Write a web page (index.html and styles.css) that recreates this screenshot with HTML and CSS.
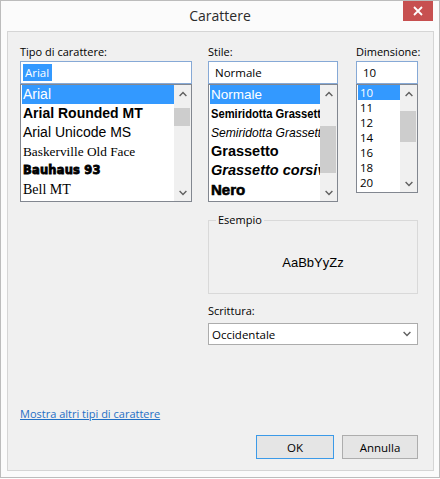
FILE: index.html
```html
<!DOCTYPE html>
<html lang="it">
<head>
<meta charset="utf-8">
<title>Carattere</title>
<link rel="stylesheet" href="styles.css">
</head>
<body>
<div class="window">
  <div class="titlebar">
    <span class="title">Carattere</span>
    <div class="close">
      <svg width="10" height="10" viewBox="0 0 10 10"><path d="M1 1 L9 9 M9 1 L1 9" stroke="#fff" stroke-width="1.8" fill="none"/></svg>
    </div>
  </div>
  <div class="client">
    <div class="columns">
      <div class="col col-font">
        <div class="label">Tipo di carattere:</div>
        <div class="edit"><span class="selection">Arial</span></div>
        <div class="list list-font">
          <div class="items">
            <div class="item selected f-arial">Arial</div>
            <div class="item f-rounded">Arial Rounded MT</div>
            <div class="item f-arial">Arial Unicode MS</div>
            <div class="item f-bask">Baskerville Old Face</div>
            <div class="item f-bauhaus">Bauhaus 93</div>
            <div class="item f-bell">Bell MT</div>
          </div>
          <div class="scroll">
            <div class="arrow"><svg width="8" height="6" viewBox="0 0 8 6"><polyline points="0.6,5 4,1.5 7.4,5" fill="none" stroke="#606060" stroke-width="1.4"/></svg></div>
            <div class="thumb thumb-font"></div>
            <div class="arrow arrow-down"><svg width="8" height="6" viewBox="0 0 8 6"><polyline points="0.6,1 4,4.5 7.4,1" fill="none" stroke="#606060" stroke-width="1.4"/></svg></div>
          </div>
        </div>
      </div>
      <div class="col col-style">
        <div class="label">Stile:</div>
        <div class="edit edit-text">Normale</div>
        <div class="list list-style">
          <div class="items">
            <div class="item selected s-normal">Normale</div>
            <div class="item"><span class="s-narrow">Semiridotta Grassetto</span></div>
            <div class="item"><span class="s-narrow-it">Semiridotta Grassetto</span></div>
            <div class="item s-bold">Grassetto</div>
            <div class="item s-bolditalic">Grassetto corsivo</div>
            <div class="item s-black">Nero</div>
          </div>
          <div class="scroll">
            <div class="arrow"><svg width="8" height="6" viewBox="0 0 8 6"><polyline points="0.6,5 4,1.5 7.4,5" fill="none" stroke="#606060" stroke-width="1.4"/></svg></div>
            <div class="thumb thumb-style"></div>
            <div class="arrow arrow-down"><svg width="8" height="6" viewBox="0 0 8 6"><polyline points="0.6,1 4,4.5 7.4,1" fill="none" stroke="#606060" stroke-width="1.4"/></svg></div>
          </div>
        </div>
      </div>
      <div class="col col-size">
        <div class="label">Dimensione:</div>
        <div class="edit edit-text">10</div>
        <div class="list list-size">
          <div class="items">
            <div class="item size selected">10</div>
            <div class="item size">11</div>
            <div class="item size">12</div>
            <div class="item size">14</div>
            <div class="item size">16</div>
            <div class="item size">18</div>
            <div class="item size">20</div>
          </div>
          <div class="scroll">
            <div class="arrow"><svg width="8" height="6" viewBox="0 0 8 6"><polyline points="0.6,5 4,1.5 7.4,5" fill="none" stroke="#606060" stroke-width="1.4"/></svg></div>
            <div class="thumb thumb-size"></div>
            <div class="arrow arrow-down"><svg width="8" height="6" viewBox="0 0 8 6"><polyline points="0.6,1 4,4.5 7.4,1" fill="none" stroke="#606060" stroke-width="1.4"/></svg></div>
          </div>
        </div>
      </div>
    </div>
    <div class="lower">
      <fieldset class="sample">
        <legend>Esempio</legend>
        <div class="sample-text">AaBbYyZz</div>
      </fieldset>
      <div class="label label-script">Scrittura:</div>
      <div class="combo">
        <span>Occidentale</span>
        <svg width="8" height="6" viewBox="0 0 8 6"><polyline points="0.6,1 4,4.5 7.4,1" fill="none" stroke="#606060" stroke-width="1.4"/></svg>
      </div>
    </div>
    <a class="more" href="#">Mostra altri tipi di carattere</a>
    <div class="buttons">
      <div class="btn btn-default">OK</div>
      <div class="btn btn-cancel">Annulla</div>
    </div>
  </div>
</div>
</body>
</html>
```
FILE: styles.css
```css
html, body {
  margin: 0;
  padding: 0;
  background: #ffffff;
}
body {
  font-family: "Open Sans", "Noto Sans", sans-serif;
  font-size: 11px;
  color: #000;
}
.window {
  position: relative;
  width: 440px;
  height: 478px;
  box-sizing: border-box;
  border: 1px solid #bcbcbc;
  background: #fbfbfb;
  display: flex;
  flex-direction: column;
}
.titlebar {
  height: 30px;
  display: flex;
  justify-content: center;
  align-items: center;
}
.title {
  font-size: 14px;
  color: #2b2b2b;
  line-height: 30px;
}
.close {
  position: absolute;
  top: 0;
  right: 6px;
  width: 30px;
  height: 20px;
  background: #c75050;
  display: flex;
  align-items: center;
  justify-content: center;
}
.client {
  margin: 0 5px 0 6px;
  height: 440px;
  box-sizing: border-box;
  border: 1px solid #d5d5d5;
  background: #f0f0f0;
  padding: 12px 15px 0 12px;
  display: flex;
  flex-direction: column;
}
.columns {
  display: flex;
}
.col {
  display: flex;
  flex-direction: column;
}
.col-font { width: 172px; }
.col-style { width: 130px; margin-left: 16px; }
.col-size { width: 62px; margin-left: 18px; }
.label {
  line-height: 15px;
  height: 15px;
  margin-bottom: 2px;
  white-space: nowrap;
}
.edit {
  height: 23px;
  box-sizing: border-box;
  border: 1px solid #86a9d6;
  background: #fff;
  padding: 1px 2px;
  display: flex;
  align-items: center;
}
.edit-text {
  padding-left: 6px;
  font-size: 11.5px;
}
.selection {
  background: #3399ff;
  color: #fff;
  line-height: 17px;
  padding: 0 3px 0 2px;
  font-size: 11.5px;
}
.list {
  box-sizing: border-box;
  border: 1px solid #828790;
  background: #fff;
  padding: 0 0 0 1px;
  display: flex;
  overflow: hidden;
}
.list-font, .list-style { height: 118px; }
.list-size { height: 109px; }
.items {
  flex: 1;
  min-width: 0;
  overflow: hidden;
  display: flex;
  flex-direction: column;
}
.item {
  height: 19px;
  line-height: 19px;
  white-space: nowrap;
  overflow: hidden;
  padding-left: 1px;
}
.item.selected {
  background: #3399ff;
  color: #fff;
}
.f-arial { font-family: "Liberation Sans", Arial, sans-serif; font-size: 14px; }
.f-rounded { font-family: "Liberation Sans", Arial, sans-serif; font-size: 14px; font-weight: bold; }
.f-bask { font-family: "Liberation Serif", serif; font-size: 13.3px; }
.f-bauhaus {
  font-family: "DejaVu Sans", "Liberation Sans", sans-serif;
  font-size: 11.5px;
  font-weight: bold;
  letter-spacing: 0.2px;
  -webkit-text-stroke: 0.8px #000;
}
.f-bell { font-family: "Liberation Serif", serif; font-size: 14px; }
.s-normal { font-family: "Liberation Sans", Arial, sans-serif; font-size: 13.5px; }
.s-narrow, .s-narrow-it {
  display: inline-block;
  font-family: "Liberation Sans", Arial, sans-serif;
  font-size: 13px;
  transform-origin: left center;
}
.s-narrow { font-weight: bold; transform: scaleX(0.86); }
.s-narrow-it { font-style: italic; transform: scaleX(0.93); }
.s-bold { font-family: "Liberation Sans", Arial, sans-serif; font-size: 14.5px; font-weight: bold; }
.s-bolditalic { font-family: "Liberation Sans", Arial, sans-serif; font-size: 14.5px; font-weight: bold; font-style: italic; }
.s-black {
  font-family: "Liberation Sans", Arial, sans-serif;
  font-size: 15px;
  font-weight: bold;
  -webkit-text-stroke: 0.6px #000;
}
.item.size {
  height: 15px;
  line-height: 15px;
  font-size: 11.5px;
  padding-left: 2px;
}
.scroll {
  width: 17px;
  flex: none;
  background: #f0f0f0;
  display: flex;
  flex-direction: column;
}
.arrow {
  height: 17px;
  display: flex;
  align-items: center;
  justify-content: center;
  flex: none;
}
.arrow-down { margin-top: auto; }
.thumb {
  background: #cdcdcd;
  margin-right: 1px;
  flex: none;
}
.thumb-font { margin-top: 6px; height: 18px; }
.thumb-style { margin-top: 24px; height: 47px; }
.thumb-size { margin-top: 9px; height: 31px; }
.lower {
  margin-left: 188px;
  width: 210px;
  display: flex;
  flex-direction: column;
}
.sample {
  margin: 11px 0 0 0;
  padding: 0;
  min-width: 0;
  border: 1px solid #d9d9d9;
}
.sample legend {
  margin-left: 7px;
  padding: 0 2px;
  line-height: 14px;
  font-size: 11px;
}
.sample-text {
  height: 61px;
  padding-top: 5px;
  display: flex;
  align-items: center;
  justify-content: center;
  font-family: "Liberation Sans", Arial, sans-serif;
  font-size: 13px;
}
.label-script { margin-top: 9px; margin-bottom: 5px; }
.combo {
  height: 22px;
  box-sizing: border-box;
  border: 1px solid #acacac;
  background: #fff;
  display: flex;
  align-items: center;
  justify-content: space-between;
  padding: 0 6px 0 3px;
  font-size: 11.5px;
}
.more {
  margin-top: 61px;
  line-height: 15px;
  color: #1f6fc5;
  text-decoration: underline;
  align-self: flex-start;
}
.buttons {
  margin-top: 14px;
  display: flex;
  justify-content: flex-end;
  gap: 8px;
}
.btn {
  height: 24px;
  box-sizing: border-box;
  border: 1px solid #adadad;
  background: #e5e5e5;
  display: flex;
  align-items: center;
  justify-content: center;
  font-size: 11.5px;
}
.btn-default {
  width: 78px;
  border-color: #3c9ae8;
}
.btn-cancel {
  width: 76px;
}
```
